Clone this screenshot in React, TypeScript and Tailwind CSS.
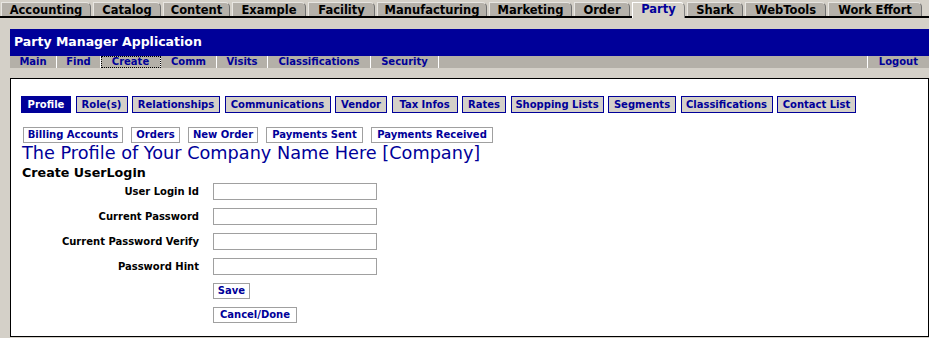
import React from 'react';

const appTabs = [
  { label: 'Accounting', w: 'w-[90px]' },
  { label: 'Catalog', w: 'w-[68px]' },
  { label: 'Content', w: 'w-[67px]' },
  { label: 'Example', w: 'w-[74px]' },
  { label: 'Facility', w: 'w-[67px]' },
  { label: 'Manufacturing', w: 'w-[110px]' },
  { label: 'Marketing', w: 'w-[83px]' },
  { label: 'Order', w: 'w-[56px]' },
  { label: 'Party', w: 'w-[53px]', active: true },
  { label: 'Shark', w: 'w-[56px]' },
  { label: 'WebTools', w: 'w-[81px]' },
  { label: 'Work Effort', w: 'w-[94px]' },
];

const navItems = [
  { label: 'Main', w: 'w-[47px]' },
  { label: 'Find', w: 'w-[44px]' },
  { label: 'Create', w: 'w-[60px]', focused: true },
  { label: 'Comm', w: 'w-[56px]' },
  { label: 'Visits', w: 'w-[51px]' },
  { label: 'Classifications', w: 'w-[103px]' },
  { label: 'Security', w: 'w-[68px]' },
];

const partyTabs = [
  { label: 'Profile', w: 'w-[50px]', active: true },
  { label: 'Role(s)', w: 'w-[52px]' },
  { label: 'Relationships', w: 'w-[88px]' },
  { label: 'Communications', w: 'w-[106px]' },
  { label: 'Vendor', w: 'w-[52px]' },
  { label: 'Tax Infos', w: 'w-[66px]' },
  { label: 'Rates', w: 'w-[44px]' },
  { label: 'Shopping Lists', w: 'w-[93px]' },
  { label: 'Segments', w: 'w-[68px]' },
  { label: 'Classifications', w: 'w-[92px]' },
  { label: 'Contact List', w: 'w-[79px]' },
];

const subLinks = [
  { label: 'Billing Accounts', w: 'w-[100px]' },
  { label: 'Orders', w: 'w-[49px]' },
  { label: 'New Order', w: 'w-[70px]' },
  { label: 'Payments Sent', w: 'w-[97px]' },
  { label: 'Payments Received', w: 'w-[122px]' },
];

const fields = ['User Login Id', 'Current Password', 'Current Password Verify', 'Password Hint'];

const LinkButton = ({ label, w }: { label: string; w: string }) => (
  <a className={`${w} h-[16px] flex items-center justify-center border border-[#a0a0a0] bg-white text-[10px] font-bold text-[#000099] leading-none cursor-pointer`}>
    {label}
  </a>
);

export default function App() {
  return (
    <div className="min-h-screen bg-[#d4d0c8] font-['DejaVu_Sans',Verdana,sans-serif] text-black">
      {/* application tabs */}
      <div className="pt-[2px]">
        <div className="flex w-fit gap-[2px] border-b-2 border-black pl-[1px] pr-[7px]">
          {appTabs.map((t) =>
            t.active ? (
              <div
                key={t.label}
                className={`${t.w} h-[16px] -mb-[2px] flex items-center justify-center pb-[1px] bg-[#d4d0c8] border-t border-l border-white border-r border-r-[#808080] rounded-tr-[5px] text-[11.5px] font-bold text-[#000099] leading-none`}
              >
                {t.label}
              </div>
            ) : (
              <div
                key={t.label}
                className={`${t.w} h-[14px] flex items-center justify-center pt-[2px] bg-[#b5b1aa] border-t border-l border-[#e8e6e2] border-r border-r-[#707070] rounded-tr-[5px] text-[11.5px] font-bold text-black leading-none`}
              >
                {t.label}
              </div>
            )
          )}
        </div>
      </div>

      <div className="pl-[10px]">
        {/* header */}
        <div className="mt-[11px] h-[27px] bg-[#000099] flex items-center pl-[4px] text-[12.5px] font-bold text-white leading-none">
          Party Manager Application
        </div>

        {/* app nav */}
        <div className="h-[12px] flex bg-[#b4b0a8]">
          {navItems.map((n) => (
            <a
              key={n.label}
              className={`${n.w} h-full flex items-center justify-center border-r border-white text-[10px] font-bold text-[#000099] leading-none ${
                n.focused ? 'outline-1 outline-dotted outline-black -outline-offset-1' : ''
              }`}
            >
              {n.label}
            </a>
          ))}
          <div className="flex-1" />
          <a className="h-full flex items-center border-l border-white px-[11px] text-[10px] font-bold text-[#000099] leading-none">
            Logout
          </a>
        </div>

        {/* content */}
        <div className="mt-[10px] border border-black bg-white pt-[17px] pb-[13px]">
          <div className="flex gap-[4.5px] pl-[10px]">
            {partyTabs.map((t) => (
              <a
                key={t.label}
                className={`${t.w} h-[17px] flex items-center justify-center border border-[#000099] text-[10px] font-bold leading-none ${
                  t.active ? 'bg-[#000099] text-white' : 'bg-[#d4d0c8] text-[#000099]'
                }`}
              >
                {t.label}
              </a>
            ))}
          </div>

          <div className="mt-[14px] flex gap-[8px] pl-[12px]">
            {subLinks.map((l) => (
              <LinkButton key={l.label} label={l.label} w={l.w} />
            ))}
          </div>

          <div className="mt-[2px] pl-[11px] text-[17.7px] text-[#000099] leading-none">
            The Profile of Your Company Name Here [Company]
          </div>
          <div className="mt-[4px] pl-[11px] text-[12.7px] font-bold leading-none">Create UserLogin</div>

          <form className="mt-[4px] grid grid-cols-[188px_164px] gap-x-[14px] gap-y-[8px]">
            {fields.map((f) => (
              <React.Fragment key={f}>
                <label className="self-center text-right text-[10px] font-bold leading-none">{f}</label>
                <input type="text" className="h-[17px] border border-[#a0a0a0] bg-white outline-none" />
              </React.Fragment>
            ))}
            <div />
            <div>
              <LinkButton label="Save" w="w-[37px]" />
            </div>
            <div />
            <div>
              <LinkButton label="Cancel/Done" w="w-[84px]" />
            </div>
          </form>
        </div>
      </div>
    </div>
  );
}
